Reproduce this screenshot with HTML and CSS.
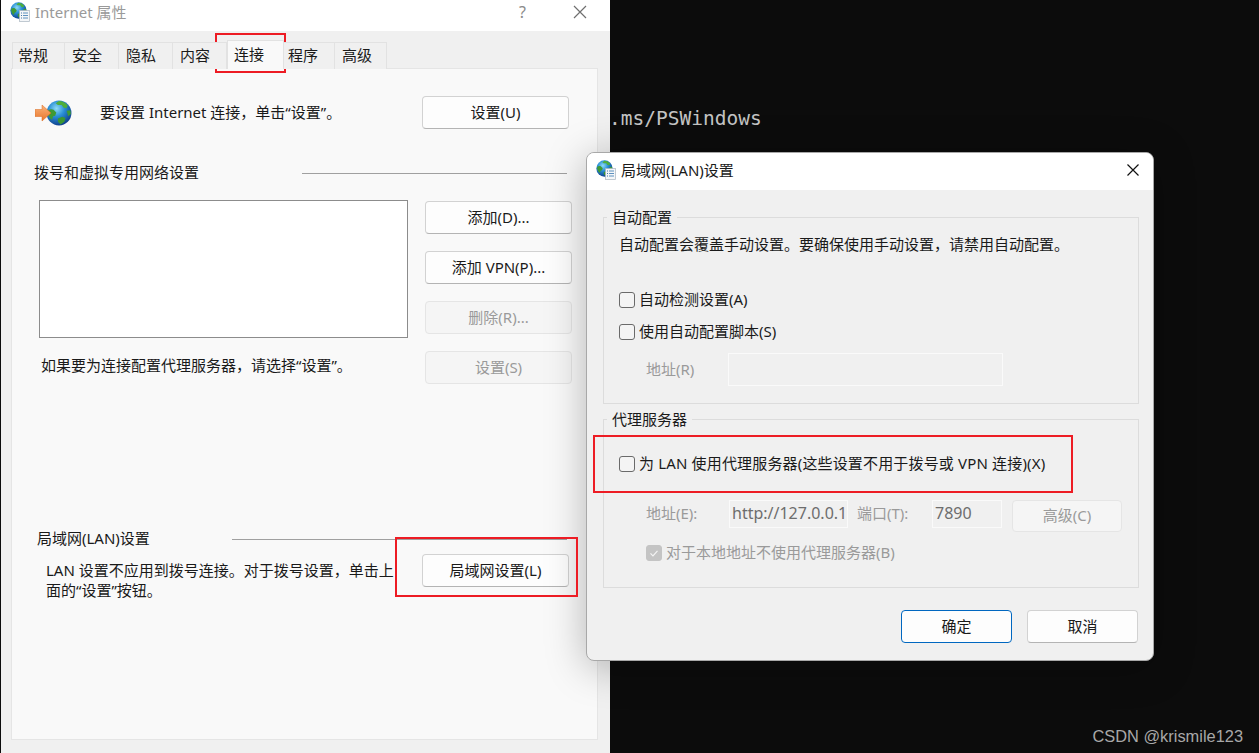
FILE: index.html
```html
<!DOCTYPE html>
<html lang="zh-CN">
<head>
    <meta charset="UTF-8">
    <title>Internet 属性</title>
    <link rel="stylesheet" href="styles.css">
</head>
<body>
    <!-- Shared icons -->
    <svg class="icon-defs" aria-hidden="true">
        <defs>
            <radialGradient id="globeBlue" cx="40%" cy="32%" r="70%">
                <stop offset="0" stop-color="#8fdcf5"/>
                <stop offset="0.45" stop-color="#2a8fd6"/>
                <stop offset="1" stop-color="#0f3f8c"/>
            </radialGradient>
            <linearGradient id="arrowOrange" x1="0" y1="0" x2="0" y2="1">
                <stop offset="0" stop-color="#f9b27a"/>
                <stop offset="1" stop-color="#e8762c"/>
            </linearGradient>
            <symbol id="globe" viewBox="0 0 24 24">
                <circle cx="12" cy="12" r="11.5" fill="url(#globeBlue)"/>
                <path d="M12 1c3 0 6 1.500 8 4l-1 2.500-3-.5-1.500-2.500L11 4.500 9 3z" fill="#4fae3c"/>
                <path d="M1.500 10c1.500-1.500 4-2 5.500-1l2.500 2.500-1 3-2 .5-1 3.500C3 17 1.500 13.500 1.500 10z" fill="#3f9a35"/>
                <path d="M11 17l4-1.500 3 1-1 3.500-3.500 2.500-2.500-2.500z" fill="#3c9632"/>
                <path d="M19 10l3.500-.5.500 3.500-2.500 2z" fill="#3f9a35"/>
            </symbol>
            <symbol id="globeDoc" viewBox="0 0 20 20">
                <use href="#globe" x="0" y="0" width="17" height="17"/>
                <rect x="9.500" y="8.500" width="10" height="11" fill="#f4f6f8" stroke="#a9b4bf" stroke-width="0.700"/>
                <path d="M13 11h5M13 13.500h5M13 16h5" stroke="#4d86b8" stroke-width="0.900"/>
                <path d="M11 11h1M11 13.500h1M11 16h1" stroke="#2f6aa0" stroke-width="0.900"/>
            </symbol>
        </defs>
    </svg>

    <!-- Terminal behind the dialogs -->
    <div class="terminal"><span class="terminal-line">.ms/PSWindows</span></div>

    <!-- Internet Properties -->
    <div class="window props-window">
        <div class="props-title">
            <svg class="title-icon"><use href="#globeDoc"/></svg>
            <span class="props-title-text">Internet 属性</span>
            <span class="help-btn">?</span>
            <svg class="close-icon close-icon-grey" viewBox="0 0 14 14"><path d="M1 1l12 12M13 1L1 13"/></svg>
        </div>

        <div class="tabs">
            <div class="tab">常规</div>
            <div class="tab">安全</div>
            <div class="tab">隐私</div>
            <div class="tab">内容</div>
            <div class="tab tab-active">连接</div>
            <div class="tab">程序</div>
            <div class="tab">高级</div>
        </div>

        <div class="panel">
            <div class="setup-row">
                <svg class="setup-icon" viewBox="0 0 38 26">
                    <use href="#globe" x="11" y="0" width="26" height="26"/>
                    <path d="M0 9.500h7V5l9 8-9 8v-4.500H0z" fill="url(#arrowOrange)" stroke="#d9691f" stroke-width="0.500"/>
                </svg>
                <span class="setup-text">要设置 Internet 连接，单击“设置”。</span>
                <button class="btn btn-panel">设置(U)</button>
            </div>

            <div class="section-head dial-head">
                <span class="dial-label">拨号和虚拟专用网络设置</span>
                <span class="section-line"></span>
            </div>

            <div class="dial-row">
                <div class="dial-left">
                    <div class="listbox"></div>
                    <p class="dial-hint">如果要为连接配置代理服务器，请选择“设置”。</p>
                </div>
                <div class="dial-buttons">
                    <button class="btn btn-side">添加(D)...</button>
                    <button class="btn btn-side">添加 VPN(P)...</button>
                    <button class="btn btn-side btn-disabled">删除(R)...</button>
                    <button class="btn btn-side btn-disabled">设置(S)</button>
                </div>
            </div>

            <div class="section-head lan-head">
                <span class="lan-label">局域网(LAN)设置</span>
                <span class="section-line"></span>
            </div>

            <div class="lan-row">
                <p class="lan-text">LAN 设置不应用到拨号连接。对于拨号设置，单击上<br>面的“设置”按钮。</p>
                <button class="btn btn-panel">局域网设置(L)</button>
            </div>
        </div>
    </div>

    <!-- LAN Settings dialog -->
    <div class="window lan-dialog">
        <div class="dialog-title">
            <svg class="title-icon"><use href="#globeDoc"/></svg>
            <span class="dialog-title-text">局域网(LAN)设置</span>
            <svg class="close-icon" viewBox="0 0 14 14"><path d="M1.500 1.500l11 11M12.500 1.500l-11 11"/></svg>
        </div>

        <div class="dialog-body">
            <fieldset class="group group-auto">
                <legend>自动配置</legend>
                <p class="auto-note">自动配置会覆盖手动设置。要确保使用手动设置，请禁用自动配置。</p>
                <label class="check-row first-check"><span class="check"></span>自动检测设置(A)</label>
                <label class="check-row second-check"><span class="check"></span>使用自动配置脚本(S)</label>
                <div class="script-row">
                    <span class="muted script-label">地址(R)</span>
                    <div class="field script-field"></div>
                </div>
            </fieldset>

            <fieldset class="group group-proxy">
                <legend>代理服务器</legend>
                <label class="check-row proxy-check"><span class="check"></span>为 LAN 使用代理服务器(这些设置不用于拨号或 VPN 连接)(X)</label>
                <div class="proxy-row">
                    <span class="muted addr-label">地址(E):</span>
                    <div class="field addr-field">http://127.0.0.1</div>
                    <span class="muted port-label">端口(T):</span>
                    <div class="field port-field">7890</div>
                    <button class="btn btn-disabled btn-advanced">高级(C)</button>
                </div>
                <label class="check-row bypass-check muted">
                    <span class="check check-disabled">
                        <svg viewBox="0 0 16 16"><path d="M4 8.500l2.800 2.800L12 5.500"/></svg>
                    </span>对于本地地址不使用代理服务器(B)
                </label>
            </fieldset>

            <div class="dialog-actions">
                <button class="btn btn-action btn-primary">确定</button>
                <button class="btn btn-action">取消</button>
            </div>
        </div>
    </div>

    <!-- Red annotation boxes -->
    <div class="mark mark-tab"></div>
    <div class="mark mark-lan"></div>
    <div class="mark mark-proxy"></div>

    <div class="watermark">CSDN @krismile123</div>
</body>
</html>
```

FILE: styles.css
```css
/* General Styles */
* {
    box-sizing: border-box;
}

html, body {
    height: 100%;
}

body {
    margin: 0;
    position: relative;
    overflow: hidden;
    background-color: #0c0c0c;
    font-family: "Noto Sans", "Noto Sans CJK SC", sans-serif;
    font-size: 15px;
    line-height: 20px;
    color: #1a1a1a;
}

p {
    margin: 0;
}

.icon-defs {
    position: absolute;
    width: 0;
    height: 0;
}

/* Terminal */
.terminal {
    position: absolute;
    top: 107px;
    left: 609px;
    font-family: "DejaVu Sans Mono", monospace;
    font-size: 19.5px;
    line-height: 24px;
    color: #c4c4c4;
    white-space: nowrap;
}

/* Windows */
.window {
    position: absolute;
    display: flex;
    flex-direction: column;
    background-color: #f0f0f0;
}

.props-window {
    left: 1px;
    top: 0;
    width: 609px;
    height: 753px;
}

.lan-dialog {
    left: 586px;
    top: 152px;
    width: 568px;
    height: 509px;
    border: 1px solid #a8a8a8;
    border-radius: 8px;
    box-shadow: 0 6px 40px rgba(0, 0, 0, 0.28);
    overflow: hidden;
}

.title-icon {
    width: 20px;
    height: 20px;
    flex: none;
}

.close-icon {
    width: 14px;
    height: 14px;
    flex: none;
    fill: none;
    stroke: #111111;
    stroke-width: 1.200;
}

.close-icon-grey {
    stroke: #6f6f6f;
}

/* Properties title bar */
.props-title {
    display: flex;
    align-items: center;
    height: 31px;
    padding: 0 23px 7px 9px;
    background-color: #ffffff;
}

.props-title-text {
    flex: 1;
    margin-left: 5px;
    color: #9a9a9a;
}

.help-btn {
    margin-right: 47px;
    font-size: 16px;
    color: #8a8a8a;
}

/* Tabs */
.tabs {
    display: flex;
    align-items: flex-end;
    height: 38px;
    padding-left: 11px;
    position: relative;
    z-index: 1;
    margin-bottom: -1px;
}

.tab {
    height: 27px;
    width: 54px;
    padding: 2px 0 0 7px;
    background-color: #f0f0f0;
    border: 1px solid #e2e2e2;
    border-bottom: none;
    border-left: none;
}

.tab:first-child {
    width: 53px;
    border-left: 1px solid #e2e2e2;
    padding-left: 5px;
}

.tab-active {
    width: 57px;
    height: 29px;
    padding: 3px 0 0 6px;
    background-color: #f9f9f9;
    border-left: 1px solid #e2e2e2;
}

.tab-active + .tab {
    width: 51px;
    padding-left: 4px;
}

.tab:last-child {
    width: 52px;
}

/* Tab panel */
.panel {
    flex: 1;
    margin: 0 12px 13px 10px;
    background-color: #f9f9f9;
    border: 1px solid #e5e5e5;
}

.setup-row {
    display: flex;
    align-items: center;
    padding: 27px 28px 0 23px;
}

.setup-icon {
    width: 38px;
    height: 26px;
    flex: none;
}

.setup-text {
    flex: 1;
    margin: 0 0 2px 27px;
}

.section-head {
    display: flex;
    align-items: center;
    height: 20px;
    padding-right: 30px;
}

.section-head span:first-child {
    line-height: 18px;
    margin-bottom: 2px;
}

.section-line {
    flex: 1;
    height: 1px;
    background-color: #a0a0a0;
}

.dial-head {
    margin-top: 34px;
    padding-left: 22px;
}

.dial-label {
    width: 268px;
}

.dial-row {
    display: flex;
    align-items: flex-start;
    margin-top: 17px;
    padding-left: 27px;
}

.dial-left {
    width: 386px;
}

.listbox {
    width: 369px;
    height: 138px;
    background-color: #ffffff;
    border: 1px solid #8c8c8c;
}

.dial-hint {
    margin-top: 17px;
    padding-left: 2px;
}

.dial-buttons {
    display: flex;
    flex-direction: column;
    gap: 17px;
    margin-top: 1px;
}

.lan-head {
    margin-top: 145px;
    padding-left: 25px;
}

.lan-label {
    width: 195px;
}

.lan-row {
    display: flex;
    align-items: flex-start;
    justify-content: space-between;
    margin-top: 5px;
    padding: 0 28px 0 34px;
}

.lan-text {
    margin-top: 6px;
    white-space: nowrap;
}

/* Buttons */
.btn {
    font: inherit;
    color: inherit;
    height: 33px;
    padding: 0 0 2px;
    background-color: #fdfdfd;
    border: 1px solid #d2d2d2;
    border-bottom-color: #b4b4b4;
    border-radius: 4px;
}

.btn-panel {
    width: 147px;
    flex: none;
}

.btn-side {
    width: 147px;
}

.btn-disabled {
    background-color: #f5f5f5;
    border-color: #e5e5e5;
    color: #9a9a9a;
}

.btn-action {
    width: 111px;
}

.btn-primary {
    border-color: #0067c0;
}

.btn-advanced {
    width: 110px;
    height: 32px;
    margin-left: 10px;
}

/* Dialog */
.dialog-title {
    display: flex;
    align-items: center;
    height: 37px;
    flex: none;
    padding: 0 13px 3px 9px;
    background-color: #ffffff;
}

.dialog-title-text {
    flex: 1;
    margin-left: 5px;
}

.dialog-body {
    padding: 17px 14px 0 16px;
}

.group {
    margin: 0;
    padding: 0 0 0 15px;
    border: 1px solid #dcdcdc;
}

.group legend {
    margin-left: -12px;
    padding: 0 5px;
    line-height: 20px;
}

.group-auto {
    height: 197px;
}

.group-proxy {
    height: 179px;
    margin-top: 5px;
}

.auto-note {
    margin-top: 7px;
}

.check-row {
    display: flex;
    align-items: center;
    height: 20px;
    padding-bottom: 2px;
    white-space: nowrap;
}

.check {
    width: 16px;
    height: 16px;
    flex: none;
    margin: 2px 4px 0 0;
    background-color: #f4f4f4;
    border: 1px solid #6a6a6a;
    border-radius: 3px;
}

.check-disabled {
    background-color: #c4c4c4;
    border-color: #c4c4c4;
}

.check-disabled svg {
    display: block;
    width: 14px;
    height: 14px;
    fill: none;
    stroke: #f4f4f4;
    stroke-width: 1.300;
}

.first-check {
    margin-top: 36px;
}

.second-check {
    margin-top: 12px;
}

.proxy-check {
    margin-top: 25px;
    letter-spacing: 0.16px;
}

.muted {
    color: #9a9a9a;
}

.field {
    height: 33px;
    background-color: #f0f0f0;
    border: 1px solid #fafafa;
}

.script-row {
    display: flex;
    align-items: center;
    margin-top: 11px;
    padding-left: 27px;
}

.script-label {
    width: 82px;
    margin-bottom: 2px;
}

.script-field {
    width: 275px;
}

.proxy-row {
    display: flex;
    align-items: flex-start;
    margin-top: 26px;
    padding-left: 27px;
}

.proxy-row .field {
    height: 28px;
    padding: 0 2px;
    line-height: 25px;
    font-size: 16px;
    color: #6d6d6d;
    white-space: nowrap;
    overflow: hidden;
}

.proxy-row .muted {
    line-height: 26px;
}

.addr-label {
    width: 83px;
}

.addr-field {
    width: 119px;
}

.port-label {
    width: 84px;
    padding-left: 9px;
}

.port-field {
    width: 70px;
}

.bypass-check {
    margin-top: 11px;
    padding-left: 27px;
}

.dialog-actions {
    display: flex;
    justify-content: flex-end;
    gap: 15px;
    margin: 22px 1px 0 0;
}

/* Annotations */
.mark {
    position: absolute;
    border: 2px solid #ed1c24;
}

.mark-tab {
    left: 215px;
    top: 33px;
    width: 71px;
    height: 40px;
}

.mark-lan {
    left: 395px;
    top: 537px;
    width: 183px;
    height: 60px;
}

.mark-proxy {
    left: 593px;
    top: 435px;
    width: 480px;
    height: 58px;
}

.watermark {
    position: absolute;
    right: 16px;
    bottom: 7px;
    font-family: "Liberation Sans", sans-serif;
    font-size: 16.4px;
    color: #a8a8a8;
}
```
